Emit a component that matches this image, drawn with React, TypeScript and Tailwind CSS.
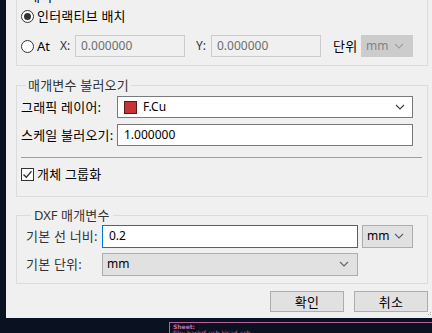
import React from "react";

const Chevron = ({ color = "#606060" }: { color?: string }) => (
  <svg width="10" height="6" viewBox="0 0 10 6" className="shrink-0">
    <path d="M1 1l4 4 4-4" fill="none" stroke={color} strokeWidth="1.1" />
  </svg>
);

const Radio = ({ checked }: { checked?: boolean }) => (
  <span className="w-[13px] h-[13px] rounded-full border border-[#333333] bg-white flex items-center justify-center shrink-0">
    {checked && <span className="w-[7px] h-[7px] rounded-full bg-[#333333]" />}
  </span>
);

const Checkbox = () => (
  <span className="w-[13px] h-[13px] border border-[#333333] bg-white flex items-center justify-center shrink-0">
    <svg width="11" height="11" viewBox="0 0 11 11">
      <path d="M1.5 5.5l2.8 2.8 5.2-6" fill="none" stroke="#333333" strokeWidth="1.3" />
    </svg>
  </span>
);

// hangul in the reference renders a bit larger than Noto CJK at 12px
const K = ({ children }: { children: React.ReactNode }) => (
  <span className="text-[13px] leading-[16px] whitespace-nowrap tracking-[0.2px]">{children}</span>
);

export default function App() {
  return (
    <div className="relative w-[432px] h-[333px] overflow-hidden bg-[#0a1120] text-[12px] leading-[16px] text-black [font-family:'Noto_Sans','Noto_Sans_CJK_KR',sans-serif]">
      <div className="ml-[6px] w-[426px] h-[318px] bg-[#f0f0f0] flex flex-col overflow-hidden">
        {/* 배치 */}
        <fieldset className="-mt-[12px] ml-[10px] w-[412px] border border-[#dcdcdc] pl-[4px] pb-[8px]">
          <legend className="ml-[5px] px-[2px] leading-[16px]"><K>배치</K></legend>
          <div className="h-[20px] mt-[1px] flex items-center">
            <Radio checked />
            <span className="ml-[3px]"><K>인터랙티브 배치</K></span>
          </div>
          <div className="h-[22px] mt-[9px] flex items-center">
            <Radio />
            <span className="ml-[3px] w-[20px] text-[13px]">At</span>
            <span className="ml-[3px] w-[15px] text-[#333333]">X:</span>
            <div className="w-[110px] h-[22px] border border-[#cccccc] bg-[#f0f0f0] flex items-center pl-[5px] text-[#6d6d6d]">
              0.000000
            </div>
            <span className="ml-[11px] w-[15px] text-[#333333]">Y:</span>
            <div className="w-[110px] h-[22px] border border-[#cccccc] bg-[#f0f0f0] flex items-center pl-[5px] text-[#6d6d6d]">
              0.000000
            </div>
            <span className="ml-[12px] w-[28px]"><K>단위</K></span>
            <div className="w-[52px] h-[22px] border border-[#cccccc] bg-[#cccccc] flex items-center justify-between pl-[4px] pr-[8px] text-[#838383]">
              <span>mm</span>
              <Chevron color="#a0a0a0" />
            </div>
          </div>
        </fieldset>

        {/* 매개변수 불러오기 */}
        <fieldset className="mt-[11px] ml-[10px] w-[412px] border border-[#dcdcdc] pl-[4px] pb-[14px]">
          <legend className="ml-[5px] px-[2px] leading-[16px] text-[#333333]"><K>매개변수 불러오기</K></legend>
          <div className="h-[22px] mt-[2px] flex items-center">
            <span className="w-[96px]"><K>그래픽 레이어:</K></span>
            <div className="w-[296px] h-[22px] border border-[#7a7a7a] bg-white flex items-center pl-[6px] pr-[7px]">
              <span className="w-[13px] h-[13px] bg-[#c83434] border border-[#5a1a1a]" />
              <span className="ml-[6px] flex-1">F.Cu</span>
              <Chevron color="#404040" />
            </div>
          </div>
          <div className="h-[22px] mt-[6px] flex items-center">
            <span className="w-[96px]"><K>스케일 불러오기:</K></span>
            <div className="w-[296px] h-[22px] border border-[#7a7a7a] bg-white flex items-center pl-[6px]">
              1.000000
            </div>
          </div>
          <div className="h-px mt-[11px] mr-[5px] bg-[#a0a0a0]" />
          <div className="h-[16px] mt-[8px] flex items-center">
            <Checkbox />
            <span className="ml-[3px]"><K>개체 그룹화</K></span>
          </div>
        </fieldset>

        {/* DXF 매개변수 */}
        <fieldset className="mt-[10px] ml-[10px] w-[412px] border border-[#dcdcdc] pl-[9px] pb-[8px]">
          <legend className="ml-[5px] px-[3px] leading-[16px] text-[#333333] text-[13px]">DXF <K>매개변수</K></legend>
          <div className="h-[22px] mt-[2px] flex items-center">
            <span className="w-[76px] text-[#333333]"><K>기본 선 너비:</K></span>
            <div className="w-[256px] h-[23px] border border-[#0078d7] bg-white flex items-center pl-[6px]">
              0.2
            </div>
            <div className="ml-[4px] w-[51px] h-[23px] border border-[#adadad] bg-[#e1e1e1] flex items-center justify-between pl-[4px] pr-[8px]">
              <span>mm</span>
              <Chevron />
            </div>
          </div>
          <div className="h-[22px] mt-[6px] flex items-center">
            <span className="w-[76px] text-[#333333]"><K>기본 단위:</K></span>
            <div className="w-[256px] h-[23px] border border-[#adadad] bg-[#e1e1e1] flex items-center justify-between pl-[4px] pr-[8px]">
              <span>mm</span>
              <Chevron />
            </div>
          </div>
        </fieldset>

        <div className="mt-[7px] flex justify-end gap-[10px] pr-[4px]">
          <button className="w-[74px] h-[21px] border border-[#adadad] bg-[#e1e1e1] flex items-center justify-center">
            <K>확인</K>
          </button>
          <button className="w-[74px] h-[21px] border border-[#adadad] bg-[#e1e1e1] flex items-center justify-center">
            <K>취소</K>
          </button>
        </div>
        <svg width="5" height="5" className="absolute left-[427px] top-[312px]">
          <rect x="3" y="0" width="1" height="1" fill="#b0b0b0" />
          <rect x="1" y="2" width="1" height="1" fill="#b0b0b0" />
          <rect x="3" y="2" width="1" height="1" fill="#b0b0b0" />
        </svg>
      </div>

      {/* schematic canvas behind */}
      <div className="absolute left-[169px] top-[322px] w-[300px] h-px bg-[#b8609f]" />
      <div className="absolute left-[169px] top-[322px] w-px h-[20px] bg-[#b8609f]" />
      <div className="absolute left-[173px] top-[324px] text-[6px] leading-[6px] font-bold text-[#c070a8] [font-family:'DejaVu_Sans',sans-serif]">
        Sheet:
      </div>
      <div className="absolute left-[173px] top-[330px] text-[6px] leading-[6px] text-[#c070a8] [font-family:'DejaVu_Sans',sans-serif]">
        File: hackrf_usb.kicad_sch
      </div>
    </div>
  );
}
